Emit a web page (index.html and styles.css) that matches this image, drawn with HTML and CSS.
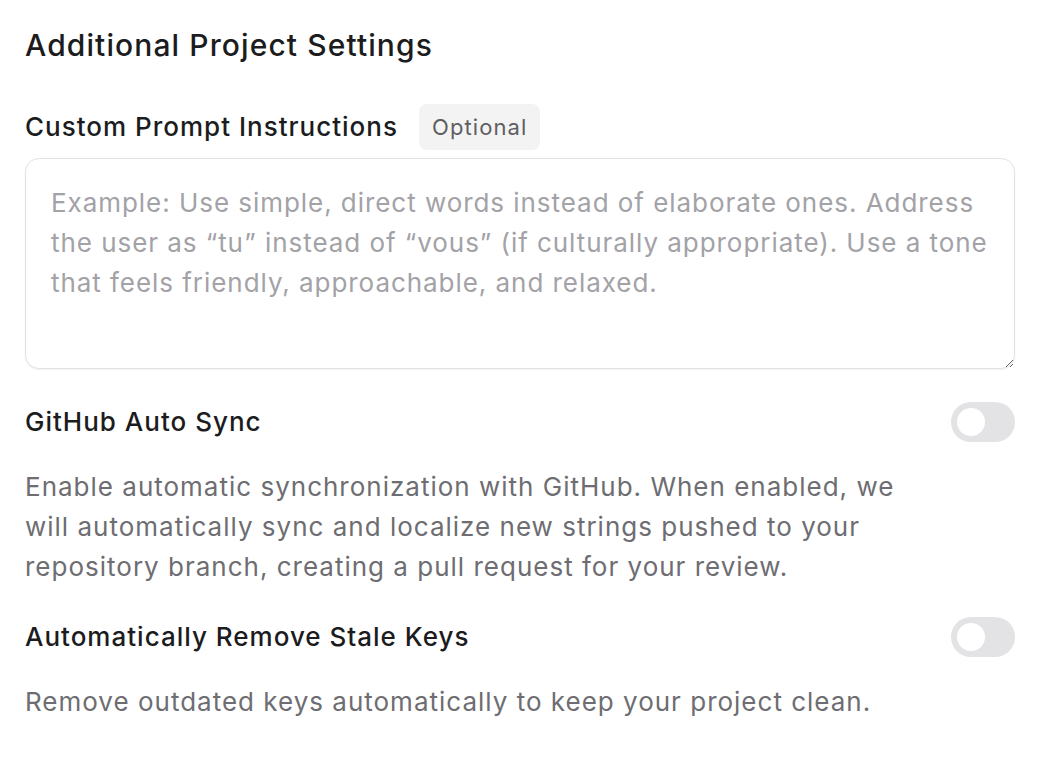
FILE: index.html
```html
<!DOCTYPE html>
<html lang="en">
<head>
<meta charset="utf-8">
<title>Additional Project Settings</title>
<link rel="stylesheet" href="styles.css">
</head>
<body>
<main class="settings">
  <h1 class="title">Additional Project Settings</h1>

  <div class="label-row">
    <label class="label" for="prompt">Custom Prompt Instructions</label>
    <span class="badge">Optional</span>
  </div>
  <textarea id="prompt" class="prompt" placeholder="Example: Use simple, direct words instead of elaborate ones. Address the user as “tu” instead of “vous” (if culturally appropriate). Use a tone that feels friendly, approachable, and relaxed."></textarea>

  <section class="setting first">
    <div class="setting-head">
      <span class="label">GitHub Auto Sync</span>
      <span class="toggle"><span class="knob"></span></span>
    </div>
    <p class="desc">Enable automatic synchronization with GitHub. When enabled, we will automatically sync and localize new strings pushed to your repository branch, creating a pull request for your review.</p>
  </section>

  <section class="setting second">
    <div class="setting-head">
      <span class="label">Automatically Remove Stale Keys</span>
      <span class="toggle"><span class="knob"></span></span>
    </div>
    <p class="desc">Remove outdated keys automatically to keep your project clean.</p>
  </section>
</main>
</body>
</html>
```

FILE: styles.css
```css
* { box-sizing: border-box; }

html, body {
  margin: 0;
  padding: 0;
  background: #ffffff;
}

body {
  font-family: Inter, "Noto Sans", sans-serif;
  color: #1c1c1e;
  height: 770px;
  overflow: hidden;
}

.settings {
  padding: 27px 27px 0 25px;
  display: flex;
  flex-direction: column;
}

.title {
  margin: 0;
  font-size: 30px;
  line-height: 36px;
  font-weight: 500;
  color: #1c1c1e;
  letter-spacing: 1.1px;
}

.label-row {
  margin-top: 41px;
  display: flex;
  align-items: center;
  gap: 21px;
  height: 46px;
}

.label {
  font-size: 26px;
  line-height: 36px;
  font-weight: 500;
  color: #1c1c1e;
  letter-spacing: 1px;
}

.badge {
  height: 46px;
  padding: 0 13px;
  display: inline-flex;
  align-items: center;
  background: #f3f3f3;
  border-radius: 8px;
  font-size: 22px;
  letter-spacing: 1.1px;
  color: #5e5e62;
}

.prompt {
  margin-top: 8px;
  width: 100%;
  height: 211px;
  border: 1.5px solid #e2e2e4;
  border-radius: 14px;
  padding: 24px 18px 24px 25px;
  font-family: Inter, "Noto Sans", sans-serif;
  font-size: 26px;
  line-height: 40px;
  letter-spacing: 0.95px;
  color: #1c1c1e;
  background: #fff;
  box-shadow: 0 1px 2px rgba(0, 0, 0, 0.06);
  resize: vertical;
  outline: none;
}

.prompt::placeholder {
  color: #a2a2a7;
}

.setting-head {
  display: flex;
  align-items: center;
  justify-content: space-between;
  height: 40px;
}

.setting.first { margin-top: 33px; }
.setting.second { margin-top: 30px; }

.toggle {
  width: 64px;
  height: 40px;
  border-radius: 20px;
  background: #e3e3e5;
  padding: 6px;
  display: flex;
  align-items: center;
}

.knob {
  width: 28px;
  height: 28px;
  border-radius: 50%;
  background: #ffffff;
}

.desc {
  margin: 25px 0 0;
  max-width: 900px;
  font-size: 26px;
  line-height: 40px;
  letter-spacing: 1px;
  color: #6d6d72;
}
```
